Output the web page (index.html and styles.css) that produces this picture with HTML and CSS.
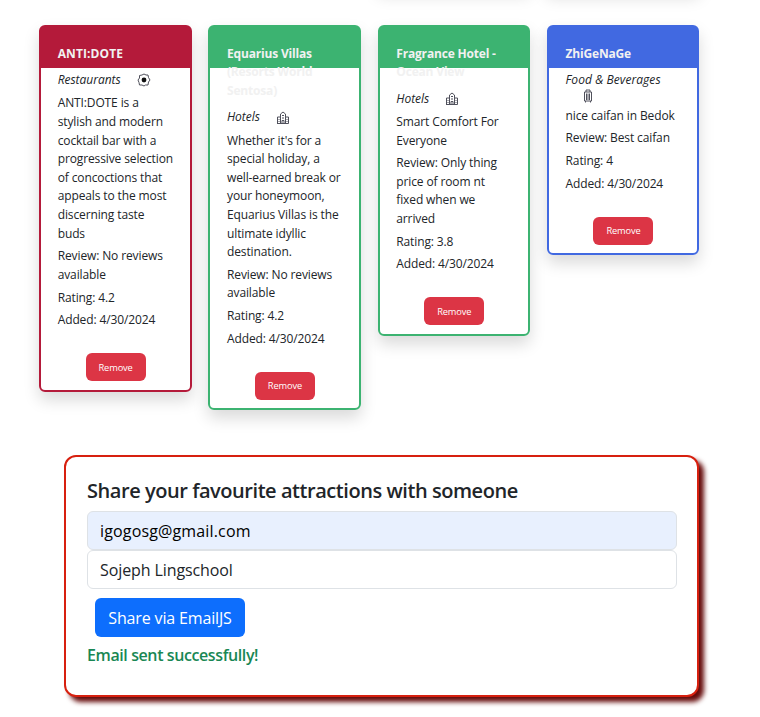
FILE: index.html
```html
<!DOCTYPE html>
<html lang="en">
<head>
<meta charset="utf-8">
<title>Favourites</title>
<link rel="stylesheet" href="styles.css">
</head>
<body>
<div class="row previous"><div></div><div></div><div class="edge"></div><div class="edge lower"></div></div>
<main class="row cards">
  <article class="card restaurant">
    <header><h5>ANTI:DOTE</h5></header>
    <p class="category"><i>Restaurants</i><svg class="icon" viewBox="0 0 14 14"><path d="M7 1 9 2 11 2 11.5 4.5 13 7 11.5 9 11 12 8.5 12 7 13 5 12 2.5 12 2 9.5 1 7 2.5 5 2.5 2.5 5 2Z"/><circle cx="7" cy="7" r="2.4" class="solid"/></svg></p>
    <p>ANTI:DOTE is a<br>stylish and modern<br>cocktail bar with a<br>progressive selection<br>of concoctions that<br>appeals to the most<br>discerning taste<br>buds</p>
    <p>Review: No reviews<br>available</p>
    <p>Rating: 4.2</p>
    <p>Added: 4/30/2024</p>
    <button class="remove">Remove</button>
  </article>
  <article class="card hotel">
    <header><h5>Equarius Villas<br>(Resorts World<br>Sentosa)</h5></header>
    <p class="category"><i>Hotels</i><svg class="icon" viewBox="0 0 14 14"><path d="M1.5 12.5V6H4.5M9.5 6H12.5V12.5H1M4.5 12.5V3L7 1 9.5 3V12.5M6 12V9.5H8V12M6 4.5H8M6 7H8M3 8V9M3 10V11M11 8V9M11 10V11"/></svg></p>
    <p>Whether it's for a<br>special holiday, a<br>well-earned break or<br>your honeymoon,<br>Equarius Villas is the<br>ultimate idyllic<br>destination.</p>
    <p>Review: No reviews<br>available</p>
    <p>Rating: 4.2</p>
    <p>Added: 4/30/2024</p>
    <button class="remove">Remove</button>
  </article>
  <article class="card hotel">
    <header><h5>Fragrance Hotel -<br>Ocean View</h5></header>
    <p class="category"><i>Hotels</i><svg class="icon" viewBox="0 0 14 14"><path d="M1.5 12.5V6H4.5M9.5 6H12.5V12.5H1M4.5 12.5V3L7 1 9.5 3V12.5M6 12V9.5H8V12M6 4.5H8M6 7H8M3 8V9M3 10V11M11 8V9M11 10V11"/></svg></p>
    <p>Smart Comfort For<br>Everyone</p>
    <p>Review: Only thing<br>price of room nt<br>fixed when we<br>arrived</p>
    <p>Rating: 3.8</p>
    <p>Added: 4/30/2024</p>
    <button class="remove">Remove</button>
  </article>
  <article class="card food">
    <header><h5>ZhiGeNaGe</h5></header>
    <p class="category wrapped"><i>Food &amp; Beverages</i><svg class="icon" viewBox="0 0 14 14"><path d="M5 3V1H9V3M3.5 3H10.5V12H3.5ZM5.5 4.5V11M7 4.5V11M8.5 4.5V11M4.5 12V13.5M9.5 12V13.5"/></svg></p>
    <p>nice caifan in Bedok</p>
    <p>Review: Best caifan</p>
    <p>Rating: 4</p>
    <p>Added: 4/30/2024</p>
    <button class="remove">Remove</button>
  </article>
</main>
<section class="share">
  <h4>Share your favourite attractions with someone</h4>
  <input class="filled" type="text" value="igogosg@gmail.com">
  <input type="text" value="Sojeph Lingschool">
  <button class="send">Share via EmailJS</button>
  <p class="success">Email sent successfully!</p>
</section>
</body>
</html>
```
FILE: styles.css
```css
* { box-sizing: border-box; }
body {
  margin: 0;
  height: 717px;
  overflow: hidden;
  background: #fff;
  color: #212529;
  font-family: "Open Sans", "Noto Sans", sans-serif;
}
h4, h5, p { margin: 0; }
.row {
  display: grid;
  grid-template-columns: repeat(4, 152.5px);
  column-gap: 16.8px;
  padding-left: 39px;
  align-items: start;
}
.previous { height: 25px; }
.edge { height: 40px; margin-top: -53px; box-shadow: 0 8px 16px rgba(0,0,0,.15); }
.lower { margin-top: -51px; }
.cards { height: 430px; }
.card {
  --accent: #b41a3a;
  border: 2px solid var(--accent);
  border-radius: 6px;
  background: linear-gradient(var(--accent) 41px, #fff 41px);
  box-shadow: 0 8px 16px rgba(0,0,0,.15);
  padding: 17.5px 12px 8.5px 16.7px;
  display: flex;
  flex-direction: column;
  white-space: nowrap;
  font-size: 12px;
  line-height: 18.6px;
  letter-spacing: -.12px;
}
.hotel { --accent: #3cb371; }
.food { --accent: #4169e1; }
.card h5 {
  color: #f1f1f1;
  font-size: 12px;
  font-weight: 700;
  line-height: 18.6px;
  letter-spacing: -.18px;
  margin-bottom: 8.1px;
}
.restaurant h5 { letter-spacing: .1px; }
.card p { margin-bottom: 4.1px; }
.card .category { margin-bottom: 4.6px; }
.category { display: flex; align-items: center; gap: 16px; }
.category i { letter-spacing: -.03px; }
.wrapped { flex-wrap: wrap; gap: 0; height: 31px; align-content: flex-start; }
.wrapped i { width: 100%; letter-spacing: .06px; }
.wrapped .icon { margin: -1px 0 0 15px; }
.icon {
  width: 14px;
  height: 14px;
  fill: none;
  stroke: #50515c;
  stroke-width: 1;
}
.solid { fill: #111; stroke: none; }
button { font-family: inherit; border: 0; color: #fff; }
.remove {
  align-self: center;
  width: 60px;
  height: 28px;
  margin: 19.2px 4px 0 0;
  padding: 0;
  border-radius: 6px;
  background: #dc3545;
  font-size: 9.3px;
  letter-spacing: -.15px;
}
.share {
  width: 635px;
  height: 242px;
  margin-left: 64px;
  padding: 22px 20px 0 21px;
  border: 2px solid #d7200f;
  border-radius: 12px;
  background: #fff;
  box-shadow: 5px 5px 5px #660b0b;
}
.share h4 {
  font-size: 20px;
  line-height: 24px;
  font-weight: 600;
  letter-spacing: -.45px;
  margin-bottom: 8px;
}
input {
  display: block;
  width: 590px;
  height: 39px;
  padding: 0 12px;
  border: 1px solid #dee2e6;
  border-radius: 6px;
  color: #212529;
  background: #fff;
  font: 16px "Open Sans", "Noto Sans", sans-serif;
  letter-spacing: -.1px;
}
.filled { background: #e8f0fe; color: #000; letter-spacing: .15px; }
.send {
  display: block;
  width: 150px;
  height: 39px;
  margin: 9px 0 6px 8px;
  padding: 0;
  border-radius: 6px;
  background: #0d6efd;
  font-size: 16px;
  letter-spacing: -.15px;
}
.success { color: #198754; font-size: 16px; line-height: 24px; font-weight: 600; letter-spacing: -.4px; }
```
